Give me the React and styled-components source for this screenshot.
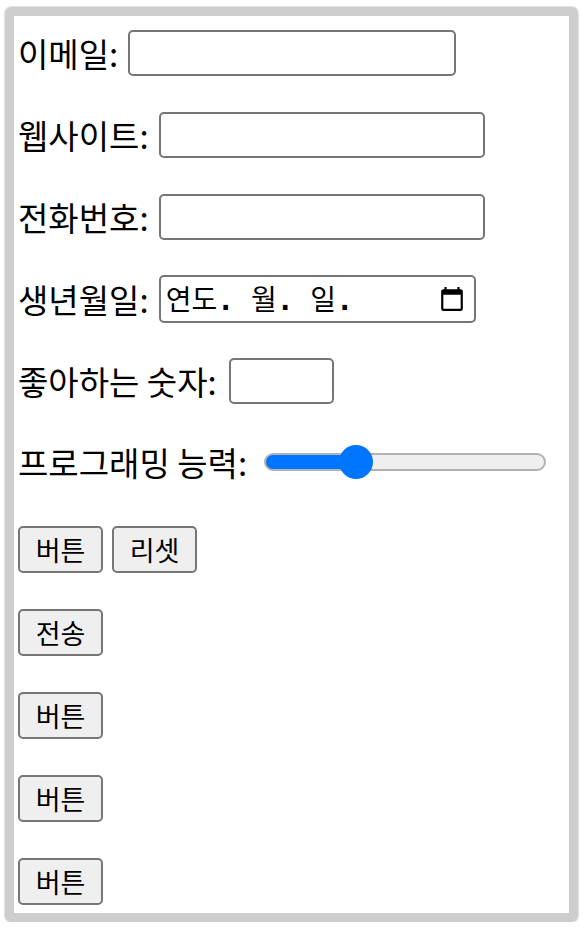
import React from 'react';
import styled, { createGlobalStyle } from 'styled-components';

const GlobalStyle = createGlobalStyle`
  html, body {
    margin: 0;
    padding: 0;
    background: #ffffff;
  }
  body {
    font-family: "Noto Sans CJK KR", "Noto Sans", sans-serif;
    color: #000;
  }
`;

const CalendarIcon = () => (
  <svg width="26" height="26" viewBox="0 0 24 24" aria-hidden="true">
    <path
      fill="#000"
      d="M20 3h-1V1h-2v2H7V1H5v2H4c-1.1 0-2 .9-2 2v16c0 1.1.9 2 2 2h16c1.1 0 2-.9 2-2V5c0-1.1-.9-2-2-2zm0 18H4V8h16v13z"
    />
  </svg>
);

const App = () => {
  const skill = 3;
  const pct = (skill / 10) * 100;

  return (
    <>
      <GlobalStyle />
      <Frame>
        <Form onSubmit={(e) => e.preventDefault()}>
          <Row>
            <Label htmlFor="email">이메일:</Label>
            <TextInput id="email" type="email" $w={328} />
          </Row>
          <Row>
            <Label htmlFor="site">웹사이트:</Label>
            <TextInput id="site" type="url" $w={326} />
          </Row>
          <Row>
            <Label htmlFor="tel">전화번호:</Label>
            <TextInput id="tel" type="tel" $w={326} />
          </Row>
          <Row>
            <Label>생년월일:</Label>
            <DateBox>
              <DateText>
                연도<Mono>. </Mono>월<Mono>. </Mono>일<Mono>.</Mono>
              </DateText>
              <CalendarIcon />
            </DateBox>
          </Row>
          <Row $gap={12}>
            <Label htmlFor="num">좋아하는 숫자:</Label>
            <TextInput id="num" type="number" $w={105} />
          </Row>
          <Row $h={44} $after={6} $gap={17}>
            <Label htmlFor="skill">프로그래밍 능력:</Label>
            <Range
              id="skill"
              type="range"
              min="0"
              max="10"
              defaultValue={skill}
              style={{
                background: `linear-gradient(to right, #0075ff 0%, #0075ff ${pct}%, #efefef ${pct}%, #efefef 100%)`,
              }}
            />
          </Row>
          <Row $h={47} $gap={9}>
            <Button type="button">버튼</Button>
            <Button type="reset">리셋</Button>
          </Row>
          <Row $h={47}>
            <Button type="submit">전송</Button>
          </Row>
          <Row $h={47}>
            <Button type="button">버튼</Button>
          </Row>
          <Row $h={47}>
            <Button type="button">버튼</Button>
          </Row>
          <Row $h={47}>
            <Button type="button">버튼</Button>
          </Row>
        </Form>
      </Frame>
    </>
  );
};

const Frame = styled.div`
  box-sizing: border-box;
  width: 573px;
  height: 915px;
  margin: 7px 0 0 5px;
  border: 9px solid #cdcdcd;
  border-radius: 6px;
  box-shadow: 0 0 1px 1px rgba(170, 170, 170, 0.35);
  overflow: hidden;
`;

const Form = styled.form`
  display: flex;
  flex-direction: column;
  gap: 36px;
  padding: 14px 0 0 4px;
`;

const Row = styled.div`
  display: flex;
  align-items: center;
  gap: ${(p) => p.$gap || 10}px;
  height: ${(p) => p.$h || 46}px;
  margin-bottom: ${(p) => p.$after || 0}px;
`;

const Label = styled.label`
  font-size: 33px;
  line-height: 1;
  white-space: nowrap;
`;

const TextInput = styled.input`
  box-sizing: border-box;
  width: ${(p) => p.$w}px;
  height: 46px;
  border: 2px solid #767676;
  border-radius: 5px;
  background: #fff;
  font-size: 26px;
  padding: 2px 6px;
  outline: none;
  &::-webkit-inner-spin-button,
  &::-webkit-outer-spin-button {
    opacity: 0;
  }
`;

const DateBox = styled.div`
  box-sizing: border-box;
  width: 317px;
  height: 48px;
  border: 2px solid #767676;
  border-radius: 5px;
  display: flex;
  align-items: center;
  justify-content: space-between;
  padding: 0 9px 0 5px;
`;

const DateText = styled.span`
  font-family: "Noto Sans CJK KR", sans-serif;
  font-size: 28px;
  line-height: 1;
  white-space: pre;
`;

const Mono = styled.span`
  font-family: "DejaVu Sans Mono", monospace;
  font-weight: 700;
`;

const Range = styled.input`
  -webkit-appearance: none;
  appearance: none;
  width: 282px;
  height: 18px;
  margin: 0;
  border: 2px solid #b2b2b2;
  border-radius: 9px;
  box-sizing: border-box;
  outline: none;

  &::-webkit-slider-thumb {
    -webkit-appearance: none;
    width: 34px;
    height: 34px;
    border-radius: 50%;
    background: #0075ff;
    border: none;
  }
`;

const Button = styled.button`
  box-sizing: border-box;
  width: 85px;
  height: 47px;
  border: 2px solid #767676;
  border-radius: 5px;
  background: #efefef;
  color: #000;
  font-family: "Noto Sans CJK KR", "Noto Sans", sans-serif;
  font-size: 27px;
  line-height: 1;
  padding: 0;
`;

export default App;
